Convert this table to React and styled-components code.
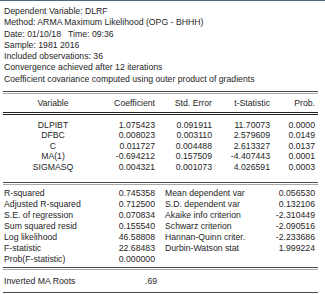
import React from 'react';
import styled, { createGlobalStyle } from 'styled-components';

const GlobalStyle = createGlobalStyle`
  body {
    margin: 0;
    background: #fff;
    font-family: "Liberation Sans", Arial, sans-serif;
    color: #262626;
  }
`;

const Output = styled.div`
  width: 325px;
  height: 294px;
  box-sizing: border-box;
  border-top: 1px solid #4d6785;
  padding: 5px 7px 0 3px;
  font-size: 8.7px;
  overflow: hidden;
`;

const Header = styled.div`
  padding-left: 1px;
  margin-bottom: 6px;
`;

const HeaderLine = styled.div`
  line-height: 11.3px;
  white-space: pre;
`;

const Rule = styled.div`
  height: ${(p) => (p.$double ? '3px' : '1px')};
  border-top: 1px solid ${(p) => p.$top || '#4a4a4a'};
  border-bottom: ${(p) => (p.$double ? `1px solid ${p.$bottom || '#a8a8a8'}` : 'none')};
  box-sizing: border-box;
`;

const CoefGrid = styled.div`
  display: grid;
  grid-template-columns: 100px 52px 57px 58px 45px;
  padding: ${(p) => p.$pad || '0'};
`;

const Cell = styled.div`
  line-height: ${(p) => p.$lh || '10.6px'};
  text-align: ${(p) => p.$align || 'right'};
  white-space: nowrap;
`;

const StatsGrid = styled.div`
  display: grid;
  grid-template-columns: 97px 55px 100px 60px;
  padding: 3px 0 2px;
`;

const StatLabel = styled.div`
  line-height: 11px;
  padding-left: ${(p) => (p.$right ? '10px' : '1px')};
  white-space: nowrap;
`;

const StatValue = styled.div`
  line-height: 11px;
  text-align: right;
  white-space: nowrap;
`;

const RootsRow = styled.div`
  display: grid;
  grid-template-columns: 141px 1fr;
  line-height: 22px;
  padding-left: 1px;
`;

const headerLines = [
  'Dependent Variable: DLRF',
  'Method: ARMA Maximum Likelihood (OPG - BHHH)',
  'Date: 01/10/18   Time: 09:36',
  'Sample: 1981 2016',
  'Included observations: 36',
  'Convergence achieved after 12 iterations',
  'Coefficient covariance computed using outer product of gradients',
];

const coefs = [
  ['DLPIBT', '1.075423', '0.091911', '11.70073', '0.0000'],
  ['DFBC', '0.008023', '0.003110', '2.579609', '0.0149'],
  ['C', '0.011727', '0.004488', '2.613327', '0.0137'],
  ['MA(1)', '-0.694212', '0.157509', '-4.407443', '0.0001'],
  ['SIGMASQ', '0.004321', '0.001073', '4.026591', '0.0003'],
];

const stats = [
  ['R-squared', '0.745358', 'Mean dependent var', '0.056530'],
  ['Adjusted R-squared', '0.712500', 'S.D. dependent var', '0.132106'],
  ['S.E. of regression', '0.070834', 'Akaike info criterion', '-2.310449'],
  ['Sum squared resid', '0.155540', 'Schwarz criterion', '-2.090516'],
  ['Log likelihood', '46.58808', 'Hannan-Quinn criter.', '-2.233686'],
  ['F-statistic', '22.68483', 'Durbin-Watson stat', '1.999224'],
  ['Prob(F-statistic)', '0.000000', '', ''],
];

const App = () => (
  <>
    <GlobalStyle />
    <Output>
      <Header>
        {headerLines.map((line) => (
          <HeaderLine key={line}>{line}</HeaderLine>
        ))}
      </Header>
      <Rule $double />
      <CoefGrid $pad="0">
        <Cell $align="center" $lh="18px">Variable</Cell>
        <Cell $lh="18px">Coefficient</Cell>
        <Cell $lh="18px">Std. Error</Cell>
        <Cell $lh="18px">t-Statistic</Cell>
        <Cell $lh="18px">Prob.</Cell>
      </CoefGrid>
      <Rule $double $top="#222" $bottom="#222" />
      <CoefGrid $pad="4.5px 0 9px">
        {coefs.map((row) =>
          row.map((v, i) => (
            <Cell key={row[0] + i} $align={i === 0 ? 'center' : 'right'}>
              {v}
            </Cell>
          ))
        )}
      </CoefGrid>
      <Rule $double />
      <StatsGrid>
        {stats.map((row) => (
          <React.Fragment key={row[0]}>
            <StatLabel>{row[0]}</StatLabel>
            <StatValue>{row[1]}</StatValue>
            <StatLabel $right>{row[2]}</StatLabel>
            <StatValue>{row[3]}</StatValue>
          </React.Fragment>
        ))}
      </StatsGrid>
      <Rule $double />
      <RootsRow>
        <span>Inverted MA Roots</span>
        <span>.69</span>
      </RootsRow>
      <Rule />
    </Output>
  </>
);

export default App;
